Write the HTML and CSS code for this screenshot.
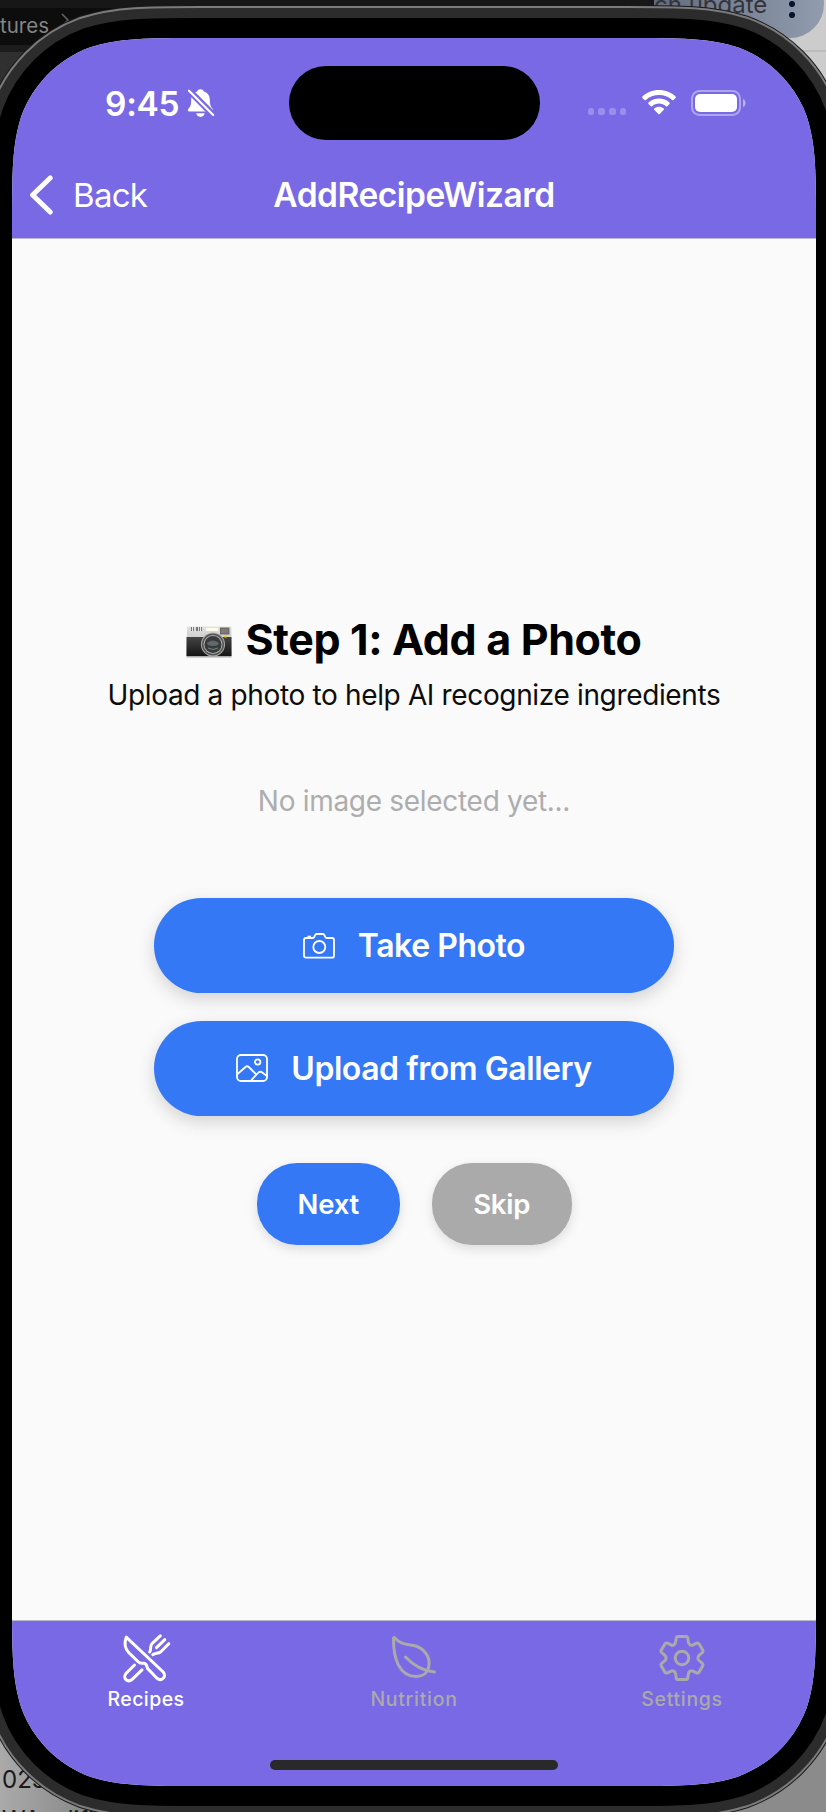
FILE: index.html
```html
<!DOCTYPE html>
<html lang="en">
<head>
<meta charset="utf-8">
<title>AddRecipeWizard</title>
<link rel="stylesheet" href="styles.css">
</head>
<body>
<div class="desktop">
  <div class="window-dark"><span class="crumb">tures &nbsp;<svg viewBox="0 0 8 14" width="8" height="14"><path d="M1 1l6 6-6 6" fill="none" stroke="#666" stroke-width="1.500"/></svg></span></div>
  <div class="window-light"></div>
  <div class="browser-pill"><span>ch update</span><i class="dot"></i><i class="dot"></i></div>
  <div class="window-bottom"><span>023</span><span>WAzelifi</span></div>

  <svg class="frame" viewBox="0 0 826 1812" aria-hidden="true">
    <defs>
      <path id="bezel" transform="translate(12 38)" d="M189.6 0H614.4C669 0 696.3 0 725.7 9.3C757.8 21 783 46.2 794.7 78.3C804 107.7 804 135 804 189.6V1558.4C804 1613 804 1640.3 794.7 1669.7C783 1701.8 757.8 1727 725.7 1738.7C696.3 1748 669 1748 614.4 1748H189.6C135 1748 107.7 1748 78.3 1738.7C46.2 1727 21 1701.8 9.3 1669.7C0 1640.3 0 1613 0 1558.4V189.6C0 135 0 107.7 9.3 78.3C21 46.2 46.2 21 78.3 9.3C107.7 0 135 0 189.6 0Z"/>
    </defs>
    <use href="#bezel" class="rim-shadow"/>
    <use href="#bezel" class="rim-light"/>
    <use href="#bezel" class="rim"/>
    <use href="#bezel" class="rim-black"/>
  </svg>

  <main class="screen">
    <header class="top">
      <div class="status">
        <div class="clock"><span class="time">9:45</span>
          <svg class="bell" viewBox="0 0 28 30"><path fill="#fff" d="M13.5 1.2c1.6 0 2.8.9 3.3 2.2 3.9 1.2 6 4.300 6 8.300 0 5 1 7 2.800 9 1 1.100 .8 2.800-.9 2.800H2.600C.7 23.500.4 22 1.400 20.800 3.300 18.700 4.200 17 4.200 11.700c0-4 2.100-7.100 6-8.300.5-1.300 1.700-2.200 3.300-2.200z"/><path fill="#fff" d="M9.200 25.300h8.500c-.4 2.200-2.200 3.600-4.200 3.600s-3.900-1.400-4.300-3.600z"/><path d="M2 2.500L27 27.500" stroke="#7969e5" stroke-width="6.500"/><path d="M2 2.700L26.200 27" stroke="#fff" stroke-width="2.200" stroke-linecap="round"/></svg>
        </div>
        <div class="island"></div>
        <div class="signals">
          <span class="cell"><i></i><i></i><i></i><i></i></span>
          <svg class="wifi" viewBox="0 0 34 25"><path fill="#fff" d="M17 0C23.500 0 29.400 2.500 33.600 6.500c.4.4.4 1 0 1.400l-2.100 2.100c-.4.4-1 .4-1.400 0C26.600 6.800 22 5 17 5S7.400 6.800 3.900 10c-.4.4-1 .4-1.400 0L.4 7.900c-.4-.4-.4-1 0-1.400C4.600 2.500 10.500 0 17 0z"/><path fill="#fff" d="M17 8.500c4 0 7.700 1.500 10.500 4.100.4.4.4 1 0 1.400l-2.200 2.200c-.4.4-1 .4-1.400 0-1.900-1.700-4.300-2.700-6.900-2.700s-5 1-6.900 2.700c-.4.4-1 .4-1.400 0L6.500 14c-.4-.4-.4-1 0-1.400C9.300 10 13 8.500 17 8.500z"/><path fill="#fff" d="M17 16.700c1.800 0 3.400.6 4.700 1.700.4.4.5 1 .1 1.400l-4.100 4.200c-.4.4-1 .4-1.400 0l-4.100-4.200c-.4-.4-.3-1 .1-1.400 1.300-1.100 2.900-1.700 4.700-1.700z"/></svg>
          <svg class="battery" viewBox="0 0 55 26"><rect x="1" y="1" width="48" height="24" rx="7.500" fill="none" stroke="#fff" stroke-opacity=".4" stroke-width="2"/><rect x="4" y="4" width="42" height="18" rx="5" fill="#fff"/><path d="M52 9c1.600.5 2.500 2 2.500 4s-.9 3.500-2.500 4z" fill="#fff" fill-opacity=".5"/></svg>
        </div>
      </div>
      <nav class="navbar">
        <div class="back"><svg viewBox="0 0 24 40"><path d="M21.200 3L3.600 20 21.200 37" fill="none" stroke="#fff" stroke-width="5" stroke-linecap="round" stroke-linejoin="round"/></svg><span class="back-label">Back</span></div>
        <span class="title">AddRecipeWizard</span>
      </nav>
    </header>

    <section class="content">
      <h1 class="heading">
        <svg class="camera" viewBox="0 0 46 32">
          <defs><linearGradient id="body" x1="0" y1="0" x2="0" y2="1"><stop offset="0" stop-color="#444"/><stop offset="1" stop-color="#151515"/></linearGradient><linearGradient id="metal" x1="0" y1="0" x2="0" y2="1"><stop offset="0" stop-color="#e2e2e0"/><stop offset="1" stop-color="#aaa"/></linearGradient></defs>
          <path d="M1 2q0-1.500 1.500-1.500h42q1 0 1 1.500v29.500H.5z" fill="url(#metal)"/>
          <path d="M.5 11h45v19H.5z" fill="url(#body)"/>
          <path d="M5 1h3v4H5zm5 0h2v4h-2zm3 0h3v4h-3z" fill="#777"/><path d="M6 1h1v4H6zm8 0h1v4h-1z" fill="#eee"/>
          <rect x="20" y="2" width="12" height="3" fill="#fffbe8"/><rect x="34.500" y="2" width="8.500" height="6" fill="#847878" stroke="#555" stroke-width=".8"/>
          <circle cx="27" cy="18.500" r="12" fill="#aaa"/><circle cx="27" cy="18.500" r="11" fill="#555"/><circle cx="27" cy="18.500" r="9.500" fill="#aaa"/><circle cx="27" cy="18.500" r="8.500" fill="#383b3c"/><path d="M21 17q6-5 12 0l-1 2q-5 2-10 0z" fill="#62686a"/><path d="M22 22q5 3 10 0" fill="none" stroke="#778083"/><circle cx="39.500" cy="10.500" r="1.300" fill="#f5bd21"/>
        </svg>
        <span class="heading-text">Step 1: Add a Photo</span>
      </h1>
      <p class="lead">Upload a photo to help AI recognize ingredients</p>
      <p class="empty">No image selected yet...</p>
      <button class="btn wide"><svg class="ico" viewBox="0 0 32 32"><g fill="none" stroke="#fff" stroke-width="1.800" stroke-linejoin="round"><path d="M3 8h6.800q.8 0 1.200-.7l1.300-2.400q.5-.9 1.400-.9h6q1 0 1.500.9l1.300 2.400q.4.700 1.200.7h5.300q2 0 2 2v15.700q0 2-2 2H3q-2 0-2-2V10q0-2 2-2z"/><path d="M4.500 6.700h3.500" stroke-width="2"/><circle cx="16.300" cy="17" r="6"/></g></svg><span class="take">Take Photo</span></button>
      <button class="btn wide"><svg class="ico" viewBox="0 0 32 32"><g fill="none" stroke="#fff" stroke-width="1.800" stroke-linejoin="round" stroke-linecap="round"><rect x="1" y="3" width="30" height="26" rx="4"/><circle cx="21.700" cy="10" r="2.700"/><path d="M1.500 22l8-7q1.700-1.400 3.300 0l7 7M14.500 29l8-8.500q1.700-1.500 3.400-.2l5 3.700"/></g></svg><span class="upload">Upload from Gallery</span></button>
      <div class="actions">
        <button class="btn next"><span>Next</span></button>
        <button class="btn skip"><span>Skip</span></button>
      </div>
    </section>

    <footer class="tabs">
      <div class="tab active">
        <svg viewBox="0 0 48 48"><g fill="none" stroke="currentColor" stroke-width="3" stroke-linecap="round" stroke-linejoin="round"><path d="M4.200 3.200c-2.200 6.500-1.300 11.500 2.700 15.500l9.500 9.300c1.800 1.700 3.700.9 5.500 1.200 3.300.6 2.800 3.200 3.600 5.200l9.200 9.600c4.800 4.200 10.400-1.500 6.500-6z"/><path d="M12.500 31l-8.300 8.300c-4.300 4.800 1.500 10 6 6L20 35.800"/><path d="M27.700 18c2-3-.3-5.500 2.300-8.300L38.300 1.800M42.800 5.700L34.500 13.700M46.800 9.700l-8 8c-3 2.300-5.500.6-8 3"/></g></svg>
        <span>Recipes</span>
      </div>
      <div class="tab nutrition">
        <svg viewBox="0 0 48 48"><g fill="none" stroke="currentColor" stroke-width="3" stroke-linecap="round" stroke-linejoin="round"><path d="M3.500 4.200c0-1 .8-1 1.400-.3 4.600 6 11 6.400 17.500 7.400 12 2 18.500 12 16.300 21.700-1 4.500-3 9.500-12.700 9.500C9.500 42.500 3.300 25 3.500 4.200z"/><path d="M15.500 23c7 7.500 17.500 13.800 29 15"/></g></svg>
        <span>Nutrition</span>
      </div>
      <div class="tab settings">
        <svg viewBox="0 0 48 48"><g fill="none" stroke="currentColor" stroke-width="3" stroke-linejoin="round"><path d="M20 2.500h8q1.500 0 1.700 1.500l.8 4.500q.3 1.600 1.700 2.300t2.800 0l3.500-1.700q1.700-.6 2.600.8l3.700 6.300q.7 1.500-.5 2.500l-3.200 2.600q-1.200 1-1.200 2.700t1.200 2.700l3.200 2.600q1.200 1 .5 2.500l-3.700 6.300q-.9 1.400-2.600.8L35 37.200q-1.400-.7-2.800 0t-1.700 2.300L29.700 44Q29.500 45.500 28 45.500h-8q-1.500 0-1.700-1.500l-.8-4.500q-.3-1.600-1.700-2.300t-2.800 0l-3.500 1.700q-1.700.6-2.600-.8l-3.700-6.300q-.7-1.500.5-2.500l3.200-2.600q1.200-1 1.200-2.700t-1.200-2.700l-3.200-2.600q-1.200-1-.5-2.500l3.700-6.300q.9-1.400 2.600-.8l3.500 1.700q1.400.7 2.800 0t1.700-2.300l.8-4.500Q18.500 2.500 20 2.500z"/><circle cx="24" cy="24" r="6.800"/></g></svg>
        <span>Settings</span>
      </div>
      <div class="home"></div>
    </footer>
  </main>
</div>
</body>
</html>
```
FILE: styles.css
```css
* { box-sizing: border-box; }
body { margin: 0; font-family: Inter, "Liberation Sans", sans-serif; }
.desktop { position: relative; width: 826px; height: 1812px; overflow: hidden; padding: 38px 10px 26px 12px; background: #8b8b8b; }
.window-dark { position: absolute; left: 0; top: 0; width: 656px; height: 130px; background: linear-gradient(#171717 0 8px, #0d0d0d 8px 45px, #1c1c1c 45px 52px, #303030 52px); }
.crumb { display: block; padding-top: 13px; color: #858585; font-size: 20.500px; line-height: 26px; }
.crumb svg { vertical-align: 6px; }
.window-light { position: absolute; left: 654px; top: 0; right: 0; height: 140px; background: linear-gradient(#bbb, #bbb) 0 50px / 100% 2px no-repeat, linear-gradient(90deg, #777, #ccc 85%); }
.browser-pill { position: absolute; left: 654px; top: -30px; width: 170px; height: 68px; border-radius: 0 34px 34px 0; background: linear-gradient(90deg, #626b7e, #929caf); color: #34353a; font-size: 24px; line-height: 28px; padding-top: 21px; }
.browser-pill .dot { position: absolute; left: 135px; top: 31px; width: 6px; height: 6px; border-radius: 50%; background: #071130; }
.browser-pill .dot + .dot { top: 42px; }
.window-bottom { position: absolute; left: 0; top: 1700px; width: 130px; height: 112px; padding: 64px 0 0 2px; background: linear-gradient(90deg, #aaa, #777); color: #191919; font-size: 24px; line-height: 32px; display: flex; flex-direction: column; gap: 8px; }
.frame { position: absolute; left: 0; top: 0; width: 826px; height: 1812px; fill: none; }
.rim-shadow { stroke: #1a1a1a; stroke-width: 66px; }
.rim-light { stroke: #7b7b7b; stroke-width: 64px; }
.rim { stroke: #2c2c2c; stroke-width: 60px; }
.rim-black { fill: #000; stroke: #000; stroke-width: 40px; }

.screen { position: relative; width: 804px; height: 1748px; display: flex; flex-direction: column; background: #fafafa; clip-path: path("M189.6 0H614.4C669 0 696.3 0 725.7 9.3C757.8 21 783 46.2 794.7 78.3C804 107.7 804 135 804 189.6V1558.4C804 1613 804 1640.3 794.7 1669.7C783 1701.8 757.8 1727 725.7 1738.7C696.3 1748 669 1748 614.4 1748H189.6C135 1748 107.7 1748 78.3 1738.7C46.2 1727 21 1701.8 9.3 1669.7C0 1640.3 0 1613 0 1558.4V189.6C0 135 0 107.7 9.3 78.3C21 46.2 46.2 21 78.3 9.3C107.7 0 135 0 189.6 0Z"); }
.top { height: 201px; background: #7969e5; border-bottom: 1px solid #bcb9cf; color: #fff; }
.status { height: 112px; display: grid; grid-template-columns: 276.500px 251px 276.500px; }
.clock { display: flex; padding: 50px 0 0 93px; gap: 8px; }
.time { font-size: 33.500px; font-weight: 600; line-height: 32px; width: 74px; letter-spacing: -.3px; white-space: nowrap; }
.bell { width: 28px; height: 30px; }
.island { margin-top: 27.500px; height: 74px; border-radius: 37px; background: #000; }
.signals { display: flex; padding: 52px 0 0 48px; }
.cell { display: flex; gap: 4px; padding-top: 18px; width: 54px; }
.cell i { width: 6.700px; height: 6.700px; border-radius: 2.500px; background: #9a8eec; }
.wifi { width: 34px; height: 25px; }
.battery { width: 55px; height: 26px; margin-left: 15px; }
.navbar { height: 88px; padding-top: 1px; display: grid; grid-template-columns: 220px 1fr 220px; align-items: center; line-height: 40px; }
.back { display: flex; padding-left: 17px; }
.back svg { width: 24px; height: 40px; }
.back-label { margin-left: 20px; font-size: 33px; letter-spacing: -.7px; }
.title { text-align: center; font-size: 33.500px; font-weight: 600; letter-spacing: -.5px; white-space: nowrap; }

.content { flex: 1; display: flex; flex-direction: column; align-items: center; padding-top: 374px; }
.heading { margin: 0; display: flex; gap: 13px; height: 52px; align-items: center; font-size: 43px; font-weight: 700; letter-spacing: -.35px; color: #000; }
.camera { width: 46px; height: 32px; margin-top: 6px; }
.heading-text { line-height: 52px; white-space: nowrap; }
.lead, .empty { margin: 0; font-size: 28px; line-height: 36px; white-space: nowrap; }
.lead { margin-top: 12px; color: #0c0c0c; letter-spacing: -.35px; }
.empty { margin-top: 70px; margin-bottom: 79px; color: #adadad; letter-spacing: -.3px; }
.btn { border: 0; padding: 0; display: flex; align-items: center; justify-content: center; font-family: inherit; font-weight: 600; color: #fff; background: #3478f6; box-shadow: 0 6px 18px rgba(0,0,0,.16); white-space: nowrap; }
.wide { width: 520px; height: 95px; border-radius: 48px; gap: 23px; font-size: 32px; letter-spacing: -.45px; margin-bottom: 27.500px; }
.ico { width: 32px; height: 32px; }
.actions { display: flex; gap: 32px; margin-top: 20px; }
.next, .skip { height: 82px; border-radius: 40px; font-size: 27.500px; letter-spacing: -.2px; box-shadow: 0 4px 12px rgba(0,0,0,.12); }
.next { width: 143.500px; }
.skip { width: 139.500px; background: #aaa; }

.tabs { height: 166px; display: grid; grid-template-columns: repeat(3, 1fr); grid-template-rows: 137px 1fr; background: #7969e5; border-top: 1px solid #bcb9cf; }
.tab { display: flex; flex-direction: column; align-items: center; padding-top: 13px; color: #aaa; font-size: 19.500px; font-weight: 500; letter-spacing: .7px; }
.tab svg { width: 48px; height: 48px; overflow: visible; }
.tab span { line-height: 26px; margin-top: 4px; }
.tab.active { color: #fff; letter-spacing: .4px; }
.home { grid-column: 1 / -1; justify-self: center; width: 288px; height: 10px; margin-top: 2px; border-radius: 5px; background: #292929; }
```
